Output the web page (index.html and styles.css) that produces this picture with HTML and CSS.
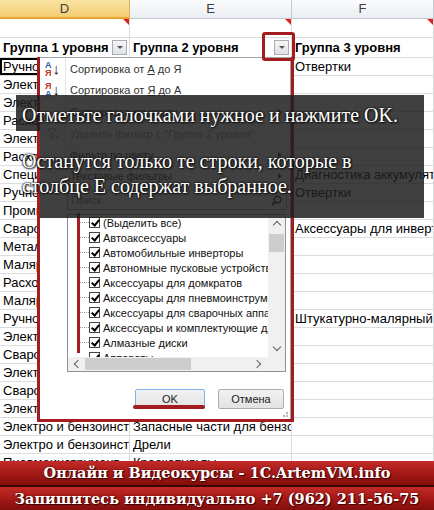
FILE: index.html
```html
<!DOCTYPE html>
<html lang="ru">
<head>
    <meta charset="UTF-8">
    <title>Фильтр по группе</title>
    <link rel="stylesheet" href="styles.css">
</head>
<body>
<div class="page">

    <div class="sheet">
        <div class="colhead sel">D</div>
        <div class="colhead">E</div>
        <div class="colhead last">F</div>

        <div class="cell"><span class="note"></span></div>
        <div class="cell"><span class="note"></span></div>
        <div class="cell"><span class="note"></span></div>

        <div class="cell head">Группа 1 уровня<span class="drop"></span></div>
        <div class="cell head">Группа 2 уровня<span class="drop"></span></div>
        <div class="cell head">Группа 3 уровня</div>

        <div class="cell active">Ручной инструмент</div><div class="cell"></div><div class="cell">Отвертки</div>
        <div class="cell">Электроинструмент</div><div class="cell"></div><div class="cell"></div>
        <div class="cell">Электроинструмент</div><div class="cell"></div><div class="cell"></div>
        <div class="cell">Расходные материалы</div><div class="cell"></div><div class="cell"></div>
        <div class="cell">Электроинструмент</div><div class="cell"></div><div class="cell"></div>
        <div class="cell">Расходные материалы</div><div class="cell"></div><div class="cell"></div>
        <div class="cell">Специнструмент</div><div class="cell"></div><div class="cell">Диагностика аккумуляторов</div>
        <div class="cell">Ручной инструмент</div><div class="cell"></div><div class="cell">Отвертки</div>
        <div class="cell">Промышленное</div><div class="cell"></div><div class="cell"></div>
        <div class="cell">Сварочное</div><div class="cell"></div><div class="cell">Аксессуары для инверторов</div>
        <div class="cell">Металлообработка</div><div class="cell"></div><div class="cell"></div>
        <div class="cell">Малярный</div><div class="cell"></div><div class="cell"></div>
        <div class="cell">Расходные материалы</div><div class="cell"></div><div class="cell"></div>
        <div class="cell">Малярный</div><div class="cell"></div><div class="cell"></div>
        <div class="cell">Ручной инструмент</div><div class="cell"></div><div class="cell">Штукатурно-малярный инструмент</div>
        <div class="cell">Электроинструмент</div><div class="cell"></div><div class="cell"></div>
        <div class="cell">Сварочное</div><div class="cell"></div><div class="cell"></div>
        <div class="cell">Электроинструмент</div><div class="cell"></div><div class="cell"></div>
        <div class="cell">Сварочное</div><div class="cell"></div><div class="cell"></div>
        <div class="cell">Электроинструмент</div><div class="cell"></div><div class="cell"></div>
        <div class="cell">Электро и бензоинструмент</div><div class="cell">Запасные части для бензоинструмента</div><div class="cell"></div>
        <div class="cell">Электро и бензоинструмент</div><div class="cell">Дрели</div><div class="cell"></div>
        <div class="cell">Пневмоинструмент</div><div class="cell">Краскопульты</div><div class="cell"></div>
    </div>

    <div class="banner">
        <div class="strip">Онлайн и Видеокурсы - 1C.ArtemVM.info</div>
        <div class="strip">Запишитесь индивидуально +7 (962) 211-56-75</div>
    </div>

    <!-- autofilter dropdown -->
    <div class="filter-menu">
        <div class="menu-item">
            <span class="gutter"><span class="sort-ico"><span class="letters"><i class="blue">А</i><i class="red">Я</i></span><span class="arr">↓</span></span></span>
            <span class="label">Сортировка от <u>А</u> до Я</span>
        </div>
        <div class="menu-item">
            <span class="gutter"><span class="sort-ico"><span class="letters"><i class="red">Я</i><i class="blue">А</i></span><span class="arr">↓</span></span></span>
            <span class="label">Сортировка от <u>Я</u> до А</span>
        </div>
        <div class="sep"></div>
        <div class="menu-item">
            <span class="gutter"></span>
            <span class="label">Сортировка по цвету</span><span class="sub"></span>
        </div>
        <div class="sep"></div>
        <div class="menu-item dim">
            <span class="gutter">
                <svg width="14" height="12" viewBox="0 0 14 12"><path d="M1 1h9L7 5v5L5 11V5z" fill="none" stroke="#999" stroke-width="1"/><path d="M9 7l4 4M13 7l-4 4" stroke="#c99" stroke-width="1.2"/></svg>
            </span>
            <span class="label">Удалить фильтр с "Группа 2 уровня"</span>
        </div>
        <div class="menu-item">
            <span class="gutter"></span>
            <span class="label">Фильтр по цвету</span><span class="sub"></span>
        </div>
        <div class="menu-item">
            <span class="gutter"></span>
            <span class="label">Текстовые фильтры</span><span class="sub"></span>
        </div>

        <div class="search">
            <span>Поиск</span>
            <svg width="11" height="11" viewBox="0 0 11 11"><circle cx="6.5" cy="4.5" r="3.3" fill="none" stroke="#333" stroke-width="1.4"/><path d="M4 7L1 10" stroke="#333" stroke-width="2"/></svg>
        </div>

        <div class="listbox">
            <div class="list-body">
                <div class="items">
                    <div class="li"><span class="dots"></span><span class="cb"></span>(Выделить все)</div>
                    <div class="li"><span class="dots"></span><span class="cb"></span>Автоаксессуары</div>
                    <div class="li"><span class="dots"></span><span class="cb"></span>Автомобильные инверторы</div>
                    <div class="li"><span class="dots"></span><span class="cb"></span>Автономные пусковые устройства</div>
                    <div class="li"><span class="dots"></span><span class="cb"></span>Аксессуары для домкратов</div>
                    <div class="li"><span class="dots"></span><span class="cb"></span>Аксессуары для пневмоинструмента</div>
                    <div class="li"><span class="dots"></span><span class="cb"></span>Аксессуары для сварочных аппаратов</div>
                    <div class="li"><span class="dots"></span><span class="cb"></span>Аксессуары и комплектующие для</div>
                    <div class="li"><span class="dots"></span><span class="cb"></span>Алмазные диски</div>
                    <div class="li"><span class="dots"></span><span class="cb"></span>Аппараты</div>
                </div>
                <div class="vscroll">
                    <span class="chev up"></span>
                    <span class="vthumb"></span>
                    <span class="chev down"></span>
                </div>
            </div>
            <div class="hscroll">
                <span class="chev left"></span>
                <span class="hthumb"></span>
                <span class="chev right"></span>
                <span class="corner"></span>
            </div>
        </div>

        <div class="buttons">
            <span class="btn ok">OK</span>
            <span class="btn">Отмена</span>
        </div>
        <div class="grip"></div>
    </div>

    <!-- red marks -->
    <div class="mark frame"></div>
    <div class="mark btn-box"></div>
    <div class="mark check-line"></div>
    <div class="mark ok-line"></div>

    <!-- hint -->
    <div class="hint">
        <p>Отметьте галочками нужное и нажмите OK.</p>
        <p>Останутся только те строки, которые в столбце Е содержат выбранное.</p>
    </div>

</div>
</body>
</html>
```

FILE: styles.css
```css
* {
    box-sizing: border-box;
}
body {
    margin: 0;
    font-family: "Liberation Sans", Arial, sans-serif;
    background: #fff;
}
.page {
    position: relative;
    width: 434px;
    height: 510px;
    overflow: hidden;
}

/* sheet */
.sheet {
    display: grid;
    grid-template-columns: 130px 162px 142px;
    grid-template-rows: 19px 19px 20px repeat(23, 18px);
    height: 461px;
    overflow: hidden;
}
.colhead {
    border-right: 1px solid #c5cad1;
    border-bottom: 1px solid #c5cad1;
    background: linear-gradient(#fbfcfd, #e9edf2);
    color: #404040;
    font-size: 13px;
    line-height: 18px;
    text-align: center;
}
.colhead.sel {
    background: linear-gradient(#f9e3a4, #f3cd71);
    border-right-color: #d9b45d;
    border-bottom: 2px solid #e9a530;
}
.cell {
    position: relative;
    border-right: 1px solid #dadcdd;
    border-bottom: 1px solid #dadcdd;
    padding-left: 3px;
    font-size: 13px;
    line-height: 17px;
    white-space: nowrap;
    overflow: hidden;
    color: #000;
}
.cell.head {
    display: flex;
    align-items: flex-end;
    justify-content: space-between;
    padding: 0 2px 1px 3px;
    font-weight: bold;
    overflow: visible;
}
.cell.active {
    box-shadow: inset 0 0 0 2px #000;
}
.note {
    position: absolute;
    top: 0;
    right: 0;
    border-top: 6px solid #e0211f;
    border-left: 6px solid transparent;
}
.drop {
    position: relative;
    width: 15px;
    height: 15px;
    margin-bottom: 1px;
    border: 1px solid #a9acb1;
    background: linear-gradient(#f6f6f7, #dfe1e4);
}
.drop::after {
    content: "";
    position: absolute;
    left: 4px;
    top: 5px;
    border-top: 3px solid #555;
    border-left: 3px solid transparent;
    border-right: 3px solid transparent;
}

/* banner */
.banner {
    height: 49px;
    display: flex;
    flex-direction: column;
    gap: 2px;
    background: #3f0505;
}
.strip {
    flex: 1;
    background: linear-gradient(#c32b28, #a11815 55%, #830e0c);
    color: #fff;
    font-family: "DejaVu Serif", serif;
    font-weight: bold;
    font-size: 14.5px;
    text-align: center;
    line-height: 23px;
    text-shadow: 1px 1px 1px #3a0000, 0 0 2px #5a0505;
}

/* filter menu */
.filter-menu {
    position: absolute;
    left: 39px;
    top: 57px;
    width: 252px;
    height: 363px;
    background: #fff;
    border: 1px solid #a0a4aa;
    display: flex;
    flex-direction: column;
    font-size: 11px;
    color: #333;
}
.menu-item {
    height: 21px;
    display: flex;
    align-items: center;
}
.menu-item.dim {
    color: #9a9a9a;
}
.gutter {
    width: 26px;
    height: 100%;
    display: flex;
    align-items: center;
    justify-content: center;
    border-right: 1px solid #e4e4e4;
}
.label {
    flex: 1;
    padding-left: 4px;
}
.sub {
    margin-right: 8px;
    border-left: 4px solid #444;
    border-top: 3px solid transparent;
    border-bottom: 3px solid transparent;
}
.sep {
    height: 1px;
    margin-left: 30px;
    background: #e2e2e2;
}
.sort-ico {
    display: flex;
    align-items: center;
    gap: 1px;
}
.letters {
    display: flex;
    flex-direction: column;
    font-size: 9px;
    line-height: 8px;
    font-weight: bold;
}
.letters i {
    font-style: normal;
}
.blue {
    color: #2d5ca8;
}
.red {
    color: #c0392b;
}
.arr {
    font-size: 15px;
    line-height: 15px;
    color: #111;
}

.search {
    margin: 4px 3px 0 27px;
    height: 20px;
    border: 1px solid #abadb3;
    display: flex;
    align-items: center;
    justify-content: space-between;
    padding: 0 4px 0 3px;
    color: #777;
}

.listbox {
    margin: 4px 4px 0 27px;
    height: 158px;
    border: 1px solid #8e9298;
    display: flex;
    flex-direction: column;
}
.list-body {
    flex: 1;
    display: flex;
    overflow: hidden;
}
.items {
    flex: 1;
    min-width: 0;
    padding: 0 0 0 12px;
    overflow: hidden;
}
.li {
    height: 15px;
    display: flex;
    align-items: center;
    white-space: nowrap;
    color: #111;
}
.dots {
    flex: none;
    width: 9px;
    border-top: 1px dotted #9a9a9a;
}
.cb {
    position: relative;
    flex: none;
    width: 11px;
    height: 11px;
    margin-right: 3px;
    border: 1px solid #444;
    background: #fff;
}
.cb::after {
    content: "";
    position: absolute;
    left: 3px;
    top: 0;
    width: 3px;
    height: 6px;
    border: solid #000;
    border-width: 0 2px 2px 0;
    transform: rotate(40deg);
}
.vscroll {
    flex: none;
    width: 17px;
    background: #f0f0f0;
    display: flex;
    flex-direction: column;
    align-items: center;
    padding: 4px 0;
}
.vthumb {
    width: 15px;
    height: 18px;
    margin-top: 6px;
    background: #cdcdcd;
}
.chev {
    width: 6px;
    height: 6px;
    border: solid #606060;
    border-width: 1.5px 0 0 1.5px;
}
.chev.up {
    transform: rotate(45deg);
    margin-top: 3px;
}
.chev.down {
    transform: rotate(225deg);
    margin-top: auto;
    margin-bottom: 3px;
}
.chev.left {
    transform: rotate(-45deg);
    margin-left: 7px;
}
.chev.right {
    transform: rotate(135deg);
    margin-left: auto;
    margin-right: 8px;
}
.hscroll {
    height: 14px;
    background: #f0f0f0;
    display: flex;
    align-items: center;
}
.hthumb {
    width: 106px;
    height: 12px;
    margin-left: 4px;
    background: #cdcdcd;
}
.corner {
    width: 17px;
    height: 14px;
    background: #f0f0f0;
}

.buttons {
    display: flex;
    justify-content: flex-end;
    gap: 13px;
    margin: 17px 6px 0 0;
}
.btn {
    width: 66px;
    height: 20px;
    border: 1px solid #acacac;
    border-radius: 2px;
    background: linear-gradient(#f2f2f2, #e2e2e2);
    text-align: center;
    line-height: 18px;
    font-size: 11px;
    color: #222;
}
.btn.ok {
    width: 70px;
    border-color: #7eb4ea;
}
.grip {
    margin: auto 2px 2px auto;
    width: 5px;
    height: 5px;
    border-right: 2px dotted #b5b5b5;
    border-bottom: 2px dotted #b5b5b5;
}

/* red annotation marks */
.mark {
    position: absolute;
    border: 3px solid #a31c20;
}
.frame {
    left: 37px;
    top: 57px;
    width: 257px;
    height: 365px;
    border-top: none;
}
.btn-box {
    left: 262px;
    top: 32px;
    width: 33px;
    height: 29px;
    border-radius: 3px;
}
.check-line {
    left: 77px;
    top: 213px;
    width: 3px;
    height: 140px;
    border: none;
    background: #a31c20;
}
.ok-line {
    left: 133px;
    top: 405px;
    width: 72px;
    height: 4px;
    border: none;
    border-radius: 2px;
    background: #a31c20;
}

/* hint box: full band for the first line, the rest starts at the red frame */
.hint {
    position: absolute;
    left: 16px;
    top: 95px;
    width: 408px;
    height: 123px;
    padding: 8px 20px 0 6px;
    background:
        linear-gradient(rgba(30, 30, 30, 0.85), rgba(30, 30, 30, 0.85)) 0 0 / 100% 36px no-repeat,
        linear-gradient(rgba(30, 30, 30, 0.85), rgba(30, 30, 30, 0.85)) 24px 36px / 384px 87px no-repeat;
    color: #fff;
    font-family: "Liberation Serif", "Times New Roman", serif;
    font-size: 20px;
    text-shadow: 0 0 2px #111, 0 0 2px #111, 1px 1px 2px #111;
}
.hint p {
    margin: 0 0 21px;
    line-height: 25px;
}
```
